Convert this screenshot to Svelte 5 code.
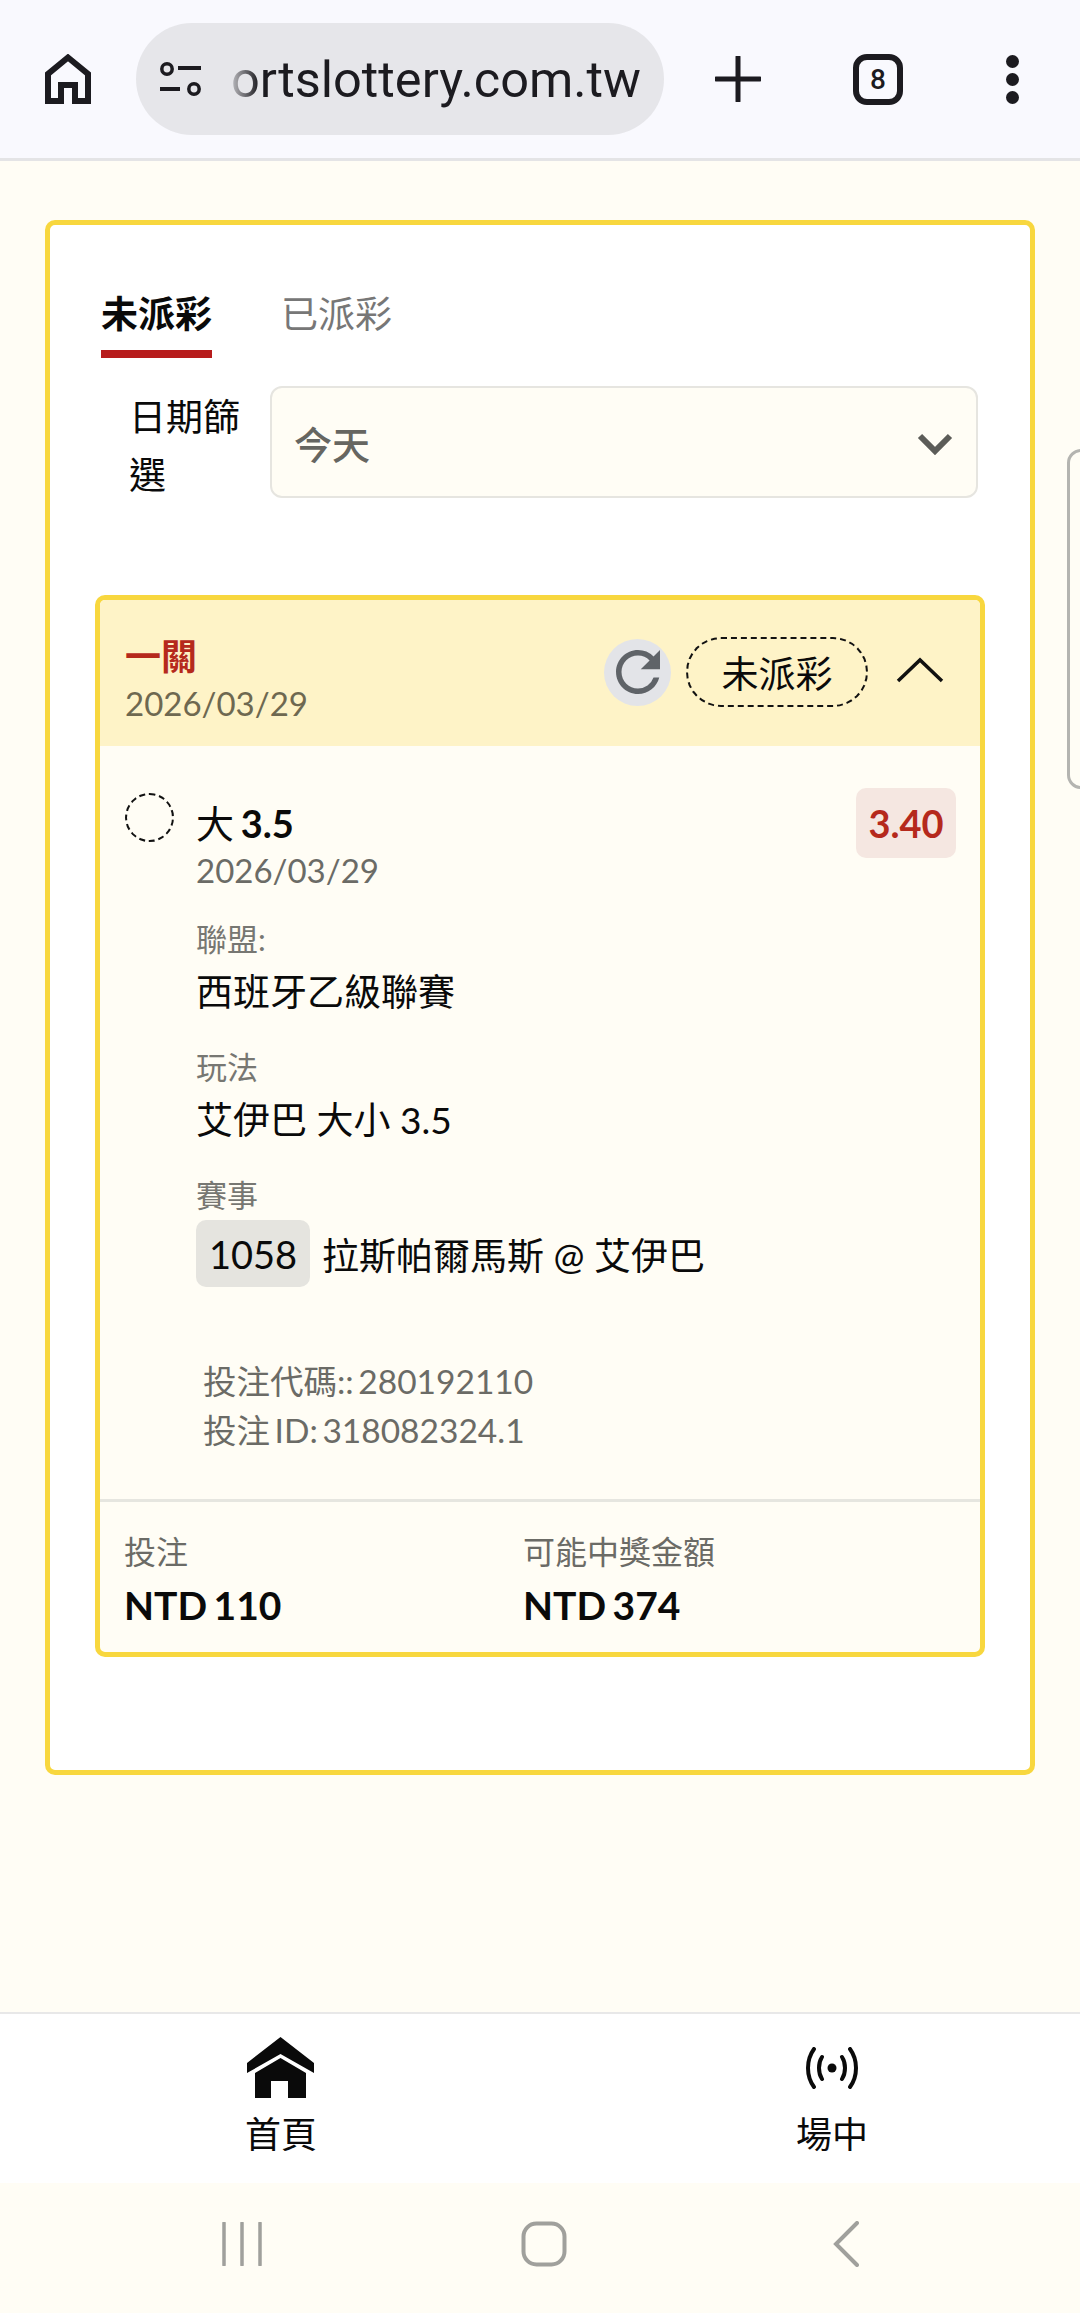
<script>
    // Bet history page as seen inside a mobile browser
    const bet = {
        title: "一關",
        date: "2026/03/29",
        pick: "大",
        line: "3.5",
        odds: "3.40",
        league: "西班牙乙級聯賽",
        market: "艾伊巴 大小 3.5",
        gameNo: "1058",
        game: "拉斯帕爾馬斯 @ 艾伊巴",
        code: "280192110",
        id: "318082324.1",
        stake: "NTD 110",
        payout: "NTD 374"
    };
</script>

<div class="page">
    <!-- browser toolbar -->
    <header class="chrome">
        <svg class="c-home" viewBox="0 0 46 50" width="46" height="50">
            <path d="M23 3.5 L43 20 V47 H30 V31 H16 V47 H3 V20 Z" fill="none" stroke="#1c1b20" stroke-width="6" />
        </svg>
        <div class="omnibox">
            <svg viewBox="0 0 41 34" width="41" height="34">
                <circle cx="7" cy="7" r="5.2" fill="none" stroke="#1c1b20" stroke-width="3.5" />
                <path d="M18 6 H41 M0 27 H20" stroke="#1c1b20" stroke-width="4" />
                <circle cx="34" cy="27" r="5.2" fill="none" stroke="#1c1b20" stroke-width="3.5" />
            </svg>
            <span class="url">ortslottery.com.tw</span>
        </div>
        <svg class="c-plus" viewBox="0 0 46 46" width="46" height="46">
            <path d="M23 1 V45 M1 23 H45" stroke="#1c1b20" stroke-width="5" stroke-linecap="round" />
        </svg>
        <div class="tabs-count">8</div>
        <div class="dots"><i></i><i></i><i></i></div>
    </header>

    <main class="content">
        <div class="side-handle"></div>

        <section class="outer">
            <nav class="tabs">
                <span class="tab active">未派彩</span>
                <span class="tab">已派彩</span>
            </nav>

            <div class="filter">
                <span class="filter-label">日期篩選</span>
                <div class="select">
                    <span>今天</span>
                    <svg viewBox="0 0 36 22" width="36" height="22">
                        <path d="M3 3 L18 18 L33 3" fill="none" stroke="#5c5c58" stroke-width="6" />
                    </svg>
                </div>
            </div>

            <article class="bet">
                <div class="bet-head">
                    <div>
                        <div class="bet-title">{bet.title}</div>
                        <div class="bet-date">{bet.date}</div>
                    </div>
                    <div class="head-right">
                        <span class="refresh">
                            <svg viewBox="0 0 24 24" width="66" height="66">
                                <path fill="#5f6368" d="M17.65 6.35A7.958 7.958 0 0 0 12 4c-4.42 0-7.99 3.58-7.99 8s3.57 8 7.99 8c3.73 0 6.84-2.55 7.73-6h-2.08A5.99 5.99 0 0 1 12 18c-3.31 0-6-2.69-6-6s2.69-6 6-6c1.66 0 3.14.69 4.22 1.78L13 11h7V4l-2.35 2.35z" />
                            </svg>
                        </span>
                        <span class="status">未派彩</span>
                        <svg class="caret" viewBox="0 0 48 26" width="48" height="26">
                            <path d="M2 24 L24 3 L46 24" fill="none" stroke="#111" stroke-width="3.5" />
                        </svg>
                    </div>
                </div>

                <div class="bet-body">
                    <div class="pick-row">
                        <span class="pick-dot"></span>
                        <div class="pick-text">
                            <div class="pick">{bet.pick} <b>{bet.line}</b></div>
                            <div class="pick-date">{bet.date}</div>
                        </div>
                        <span class="odds">{bet.odds}</span>
                    </div>

                    <div class="details">
                        <div class="field">
                            <div class="field-label">聯盟:</div>
                            <div class="field-value">{bet.league}</div>
                        </div>
                        <div class="field">
                            <div class="field-label">玩法</div>
                            <div class="field-value">{bet.market}</div>
                        </div>
                        <div class="field">
                            <div class="field-label">賽事</div>
                            <div class="game">
                                <span class="game-no">{bet.gameNo}</span>
                                <span>{bet.game}</span>
                            </div>
                        </div>
                        <div class="codes">
                            <div>投注代碼:: {bet.code}</div>
                            <div>投注 ID: {bet.id}</div>
                        </div>
                    </div>
                </div>

                <div class="bet-foot">
                    <div>
                        <div class="foot-label">投注</div>
                        <div class="foot-value">{bet.stake}</div>
                    </div>
                    <div>
                        <div class="foot-label">可能中獎金額</div>
                        <div class="foot-value">{bet.payout}</div>
                    </div>
                </div>
            </article>
        </section>
    </main>

    <!-- bottom navigation of the site -->
    <nav class="bottom-nav">
        <div class="nav-item">
            <div class="nav-icon">
                <svg viewBox="0 0 68 62" width="68" height="62">
                    <path d="M33.5 0 L67 26 V36 L33.5 17 L0 36 V26 Z" fill="#0a0a0a" />
                    <path d="M8 36 L33.5 21 L59 36 V61 H41 V44 H24 V61 H8 Z" fill="#0a0a0a" />
                </svg>
            </div>
            <span>首頁</span>
        </div>
        <div class="nav-item">
            <div class="nav-icon">
                <svg viewBox="0 0 52 42" width="52" height="42">
                    <circle cx="26" cy="21" r="4.5" fill="#0a0a0a" />
                    <path d="M8 2 C0 13 0 29 8 40 M16 10 C12 16 12 26 16 32 M44 2 C52 13 52 29 44 40 M36 10 C40 16 40 26 36 32" fill="none" stroke="#0a0a0a" stroke-width="4" stroke-linecap="round" />
                </svg>
            </div>
            <span>場中</span>
        </div>
    </nav>

    <!-- android system buttons -->
    <footer class="system">
        <svg viewBox="0 0 40 44" width="40" height="44">
            <path d="M2 1 V43 M20 1 V43 M38 1 V43" stroke="#a0a09c" stroke-width="3.5" stroke-linecap="round" />
        </svg>
        <svg class="sys-home" viewBox="0 0 46 46" width="46" height="46">
            <rect x="2.5" y="2.5" width="41" height="41" rx="13" fill="none" stroke="#a0a09c" stroke-width="4" />
        </svg>
        <svg viewBox="0 0 26 46" width="26" height="46">
            <path d="M24 2 L3 23 L24 44" fill="none" stroke="#a0a09c" stroke-width="4" stroke-linecap="round" />
        </svg>
    </footer>
</div>

<style>
    :global(body) {
        margin: 0;
    }

    .page {
        width: 1080px;
        height: 2313px;
        display: flex;
        flex-direction: column;
        background: #fffdf5;
        color: #0a0a0a;
        font-family: Lato, "Noto Sans CJK TC", sans-serif;
        overflow: hidden;
    }

    /* ===== BROWSER TOOLBAR ===== */
    .chrome {
        box-sizing: border-box;
        height: 161px;
        flex-shrink: 0;
        display: flex;
        align-items: center;
        background: #f9f9fe;
        border-bottom: 3px solid #e4e4e6;
    }

    .c-home {
        margin-left: 45px;
    }

    .omnibox {
        box-sizing: border-box;
        width: 528px;
        height: 112px;
        margin-left: 45px;
        padding-left: 24px;
        display: flex;
        align-items: center;
        gap: 30px;
        background: #e6e6ea;
        border-radius: 56px;
    }

    .url {
        font-family: Roboto, sans-serif;
        font-size: 50.5px;
        color: #1c1b20;
        white-space: nowrap;
        -webkit-mask-image: linear-gradient(to right, rgba(0, 0, 0, 0.2), #000 28px);
        mask-image: linear-gradient(to right, rgba(0, 0, 0, 0.2), #000 28px);
    }

    .c-plus {
        margin-left: 51px;
    }

    .tabs-count {
        box-sizing: border-box;
        width: 50px;
        height: 51px;
        margin-left: 92px;
        display: flex;
        align-items: center;
        justify-content: center;
        border: 6px solid #1c1b20;
        border-radius: 14px;
        font-family: Roboto, sans-serif;
        font-size: 28px;
        font-weight: 500;
        color: #1c1b20;
    }

    .dots {
        margin-left: 103px;
        display: flex;
        flex-direction: column;
        gap: 5px;
    }

    .dots i {
        display: block;
        width: 13px;
        height: 13px;
        border-radius: 50%;
        background: #1c1b20;
    }

    /* ===== PAGE CONTENT ===== */
    .content {
        position: relative;
        flex: 1;
        padding: 59px 45px 0;
    }

    /* edge of a floating panel, sticks in from the right */
    .side-handle {
        position: absolute;
        left: 1067px;
        top: 288px;
        width: 40px;
        height: 340px;
        box-sizing: border-box;
        border: 3px solid #b4b4b0;
        border-radius: 14px;
    }

    .outer {
        box-sizing: border-box;
        width: 990px;
        height: 1555px;
        padding: 0 45px;
        background: #fff;
        border: 5px solid #f8d73e;
        border-radius: 10px;
    }

    .tabs {
        display: flex;
        gap: 69px;
        padding: 63px 0 0 6px;
    }

    .tab {
        font-size: 37px;
        line-height: 52px;
        color: #777;
        padding-bottom: 10px;
        border-bottom: 8px solid transparent;
    }

    .tab.active {
        color: #0a0a0a;
        font-weight: 700;
        border-bottom-color: #b71c1c;
    }

    .filter {
        display: flex;
        height: 112px;
        margin-top: 28px;
        padding: 0 7px 0 34px;
    }

    .filter-label {
        width: 120px;
        margin-top: 2px;
        font-size: 37px;
        line-height: 58px;
    }

    .select {
        box-sizing: border-box;
        flex: 1;
        height: 112px;
        margin-left: 21px;
        padding: 0 23px 0 22px;
        display: flex;
        align-items: center;
        justify-content: space-between;
        background: #fffdf5;
        border: 2.5px solid #e6e5e0;
        border-radius: 12px;
        font-size: 38px;
        font-weight: 500;
        color: #666661;
    }

    .select svg {
        margin-top: 3px;
    }

    /* ===== BET CARD ===== */
    .bet {
        box-sizing: border-box;
        height: 1062px;
        margin-top: 97px;
        background: #fffdf5;
        border: 5px solid #f8d73e;
        border-radius: 10px;
        overflow: hidden;
    }

    .bet-head {
        box-sizing: border-box;
        height: 146px;
        padding: 31px 36px 0 25px;
        display: flex;
        justify-content: space-between;
        align-items: flex-start;
        background: #fef3c7;
    }

    .bet-title {
        font-size: 36px;
        line-height: 50px;
        font-weight: 700;
        color: #b5291c;
    }

    .bet-date {
        font-size: 33px;
        line-height: 44px;
        color: #6e6850;
    }

    .head-right {
        display: flex;
        align-items: center;
        margin-top: 6px;
    }

    .refresh {
        width: 67px;
        height: 67px;
        display: flex;
        align-items: center;
        justify-content: center;
        background: #e3e4e8;
        border-radius: 50%;
    }

    .status {
        box-sizing: border-box;
        width: 182px;
        height: 70px;
        margin-left: 15px;
        display: flex;
        align-items: center;
        justify-content: center;
        border: 2.5px dashed #111;
        border-radius: 35px;
        font-size: 37px;
    }

    .caret {
        margin: -4px 0 0 28px;
    }

    .bet-body {
        padding: 42px 24px 0 25px;
    }

    .pick-row {
        display: flex;
        align-items: flex-start;
    }

    .pick-dot {
        box-sizing: border-box;
        width: 49px;
        height: 49px;
        margin-top: 5px;
        border: 2.5px dashed #111;
        border-radius: 50%;
    }

    .pick-text {
        margin: 10px 0 0 22px;
    }

    .pick {
        font-size: 38px;
        line-height: 50px;
        word-spacing: -3px;
    }

    .pick-date {
        font-size: 33px;
        line-height: 44px;
        color: #6b6b66;
    }

    .odds {
        box-sizing: border-box;
        width: 100px;
        height: 70px;
        margin-left: auto;
        display: flex;
        align-items: center;
        justify-content: center;
        background: #f5e7e1;
        border-radius: 10px;
        font-size: 38px;
        font-weight: 700;
        color: #b5291c;
    }

    .details {
        margin-left: 71px;
    }

    .field {
        margin-top: 30px;
    }

    .field:first-child {
        margin-top: 27px;
    }

    .field-label {
        font-size: 31px;
        line-height: 40px;
        color: #777772;
    }

    .field-value {
        margin-top: 8px;
        font-size: 37px;
        line-height: 50px;
    }

    .game {
        margin-top: 5px;
        display: flex;
        align-items: center;
        gap: 12px;
        font-size: 37px;
    }

    .game-no {
        box-sizing: border-box;
        width: 114px;
        height: 67px;
        display: flex;
        align-items: center;
        justify-content: center;
        background: #e5e4df;
        border-radius: 10px;
        font-size: 38px;
    }

    .codes {
        margin: 70px 0 0 7px;
        font-size: 33.5px;
        line-height: 49px;
        word-spacing: -4px;
        color: #6b6b66;
    }

    .bet-foot {
        margin-top: 44px;
        padding: 28px 0 0 24px;
        display: grid;
        grid-template-columns: 399px 1fr;
        border-top: 3px solid #e6e6e0;
    }

    .foot-label {
        font-size: 32px;
        line-height: 44px;
        color: #6b6b66;
    }

    .foot-value {
        margin-top: 6px;
        font-size: 39px;
        line-height: 50px;
        font-weight: 700;
        word-spacing: -3px;
    }

    /* ===== BOTTOM NAV ===== */
    .bottom-nav {
        box-sizing: border-box;
        height: 171px;
        flex-shrink: 0;
        display: flex;
        gap: 351px;
        padding: 23px 0 0 181px;
        background: #fff;
        border-top: 2px solid #e8e8e8;
    }

    .nav-item {
        width: 200px;
        display: flex;
        flex-direction: column;
        align-items: center;
        font-size: 36px;
        line-height: 50px;
    }

    .nav-icon {
        height: 62px;
        display: flex;
        align-items: center;
        margin-bottom: 10px;
    }

    .system {
        box-sizing: border-box;
        height: 130px;
        flex-shrink: 0;
        display: flex;
        align-items: center;
        justify-content: space-between;
        padding: 0 221px 8px 222px;
    }

    .sys-home {
        margin-right: 8px;
    }
</style>
